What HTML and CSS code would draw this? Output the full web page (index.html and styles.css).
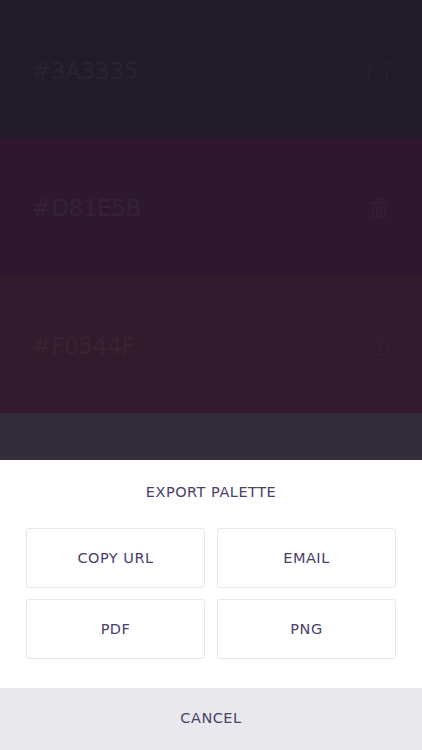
FILE: index.html
```html
<!DOCTYPE html>
<html>
<head>
    <title>Export palette</title>
    <link rel="stylesheet" href="styles.css">
</head>
<body>
    <div class="palette">
        <div class="swatch swatch-1">
            <span class="hex">#3A3335</span>
            <svg class="icon" width="24" height="22" viewBox="0 0 24 22"><path d="M2 6h12M2 6v14h18V10M16 2h6v6M22 2l-9 9" fill="none" stroke="currentColor" stroke-width="2"/></svg>
        </div>
        <div class="swatch swatch-2">
            <span class="hex">#D81E5B</span>
            <svg class="icon" width="24" height="22" viewBox="0 0 24 22"><path d="M2 6h20M6 6v14h12V6M10 9v9M14 9v9M9 6V2h6v4" fill="none" stroke="currentColor" stroke-width="2"/></svg>
        </div>
        <div class="swatch swatch-3">
            <span class="hex">#F0544F</span>
            <svg class="icon" width="24" height="22" viewBox="0 0 24 22"><path d="M3 11a9 9 0 1 0 18 0a9 9 0 1 0-18 0M12 6v5l3 3" fill="none" stroke="currentColor" stroke-width="2"/></svg>
        </div>
        <div class="swatch swatch-4"></div>
    </div>

    <div class="sheet">
        <h2 class="sheet-title">EXPORT PALETTE</h2>
        <div class="options">
            <button class="option">COPY URL</button>
            <button class="option">EMAIL</button>
            <button class="option">PDF</button>
            <button class="option">PNG</button>
        </div>
        <button class="cancel">CANCEL</button>
    </div>
</body>
</html>
```

FILE: styles.css
```css
html, body { margin: 0; padding: 0; }
body { width: 422px; height: 750px; overflow: hidden; font-family: "DejaVu Sans", sans-serif; background: #1f1b29; }

.palette { display: flex; flex-direction: column; }
.swatch { display: flex; align-items: center; justify-content: space-between; height: 138px; padding: 3px 31px 0 32px; box-sizing: border-box; }
.swatch-1 { background: #1f1b29; color: #28232f; }
.swatch-2 { background: #2e1830; color: #36203a; height: 137px; }
.swatch-3 { background: #321b2d; color: #3a2334; }
.swatch-4 { background: #332c39; height: 47px; padding: 0; }
.hex { font-size: 23px; font-weight: 400; letter-spacing: -0.3px; -webkit-text-stroke: 0.4px currentColor; }
.icon { margin-top: 0; opacity: 0.6; }

.sheet { background: #fff; display: flex; flex-direction: column; }
.sheet-title { margin: 0; padding: 24px 0 0; height: 68px; box-sizing: border-box; text-align: center; font-size: 14.5px; font-weight: 400; letter-spacing: 0.5px; color: #4a406a; }
.options { display: grid; grid-template-columns: 1fr 1fr; gap: 11px 12px; padding: 0 26px 29px; }
.option { height: 60px; background: #fff; border: 1px solid #e7e6ea; border-radius: 3px; font-family: inherit; font-size: 14.5px; letter-spacing: 0.5px; color: #4a406a; }
.cancel { height: 62px; padding: 0 0 2px; border: none; background: #e9e8ec; font-family: inherit; font-size: 14.5px; letter-spacing: 0.5px; color: #4a406a; }
```
